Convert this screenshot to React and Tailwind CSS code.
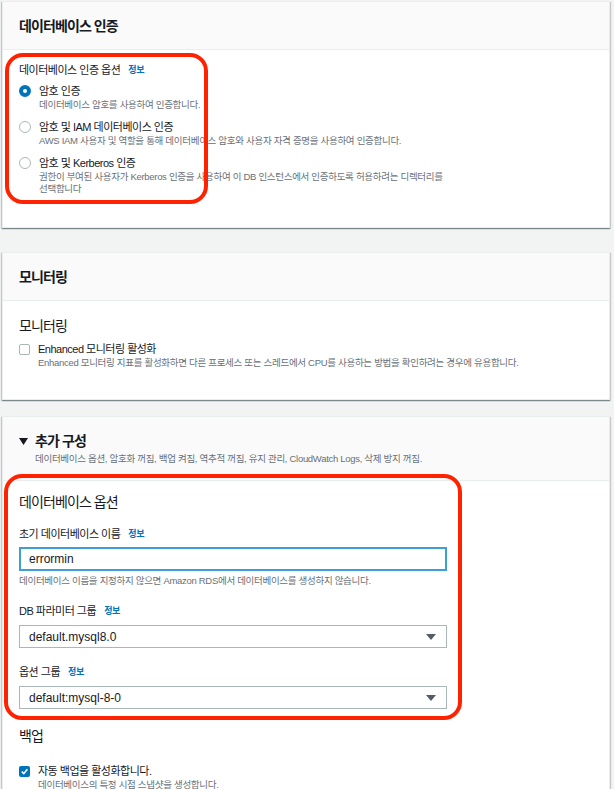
const KO_TITLE = "text-[14px] tracking-[-0.9px] leading-[20px]";
const KO_LABEL = "text-[11px] tracking-[-0.5px] leading-[16px]";
const KO_DESC = "text-[9.5px] tracking-[-0.3px] leading-[12px] text-[#687078]";

function Info() {
  return (
    <span className="ml-[8px] text-[9px] tracking-[-0.3px] font-bold text-[#0073bb]">정보</span>
  );
}

function Card({ children, className = "" }) {
  return (
    <div
      className={
        "bg-white border border-[#eaeded] shadow-[0_1px_1px_0_rgba(0,28,36,0.3),1px_1px_1px_0_rgba(0,28,36,0.15),-1px_1px_1px_0_rgba(0,28,36,0.15)] " +
        className
      }
    >
      {children}
    </div>
  );
}

function CardHeader({ title }) {
  return (
    <div className="h-[48px] bg-[#fafafa] border-b border-[#eaeded] px-4 flex items-center">
      <h2 className={KO_TITLE + " font-bold"}>{title}</h2>
    </div>
  );
}

function Radio({ checked, label, desc }) {
  return (
    <div className="flex items-start">
      {checked ? (
        <span className="mt-[2px] w-[12px] h-[12px] rounded-full border-[4px] border-[#0073bb] bg-white shrink-0" />
      ) : (
        <span className="mt-[2px] w-[12px] h-[12px] rounded-full border border-[#aab7b8] bg-white shrink-0" />
      )}
      <div className="ml-[8px]">
        <div className={KO_LABEL}>{label}</div>
        <div className={KO_DESC}>{desc}</div>
      </div>
    </div>
  );
}

function Checkbox({ checked, label, desc }) {
  return (
    <div className="flex items-start">
      {checked ? (
        <span className="mt-[3px] w-[11px] h-[11px] rounded-[2px] bg-[#0073bb] flex items-center justify-center shrink-0">
          <svg width="9" height="9" viewBox="0 0 10 10">
            <path d="M2 5.2 L4.2 7.4 L8.2 2.6" fill="none" stroke="white" strokeWidth="1.8" />
          </svg>
        </span>
      ) : (
        <span className="mt-[3px] w-[11px] h-[11px] rounded-[2px] border border-[#aab7b8] bg-white shrink-0" />
      )}
      <div className="ml-[8px]">
        <div className={KO_LABEL}>{label}</div>
        <div className={KO_DESC}>{desc}</div>
      </div>
    </div>
  );
}

function SelectBox({ value }) {
  return (
    <div className="mt-[6px] w-[428px] h-[23px] border border-[#aab7b8] bg-white flex items-center justify-between pl-[9px] pr-[10px]">
      <span className="text-[12px] tracking-normal">{value}</span>
      <svg width="10" height="6" viewBox="0 0 10 6">
        <polygon points="0,0 10,0 5,6" fill="#545b64" />
      </svg>
    </div>
  );
}

export default function App() {
  return (
    <div className="relative w-[614px] min-h-[789px] overflow-hidden bg-[#f2f3f3] pl-[2px] pr-[4px] pt-px font-['Liberation_Sans','Noto_Sans_CJK_KR',sans-serif] text-[#16191f]">
      {/* 데이터베이스 인증 */}
      <Card>
        <CardHeader title="데이터베이스 인증" />
        <div className="px-4 pt-3 pb-8">
          <div className={KO_LABEL + " flex items-center"}>
            데이터베이스 인증 옵션
            <Info />
          </div>
          <div className="mt-[5px] flex flex-col gap-2">
            <Radio checked label="암호 인증" desc="데이터베이스 암호를 사용하여 인증합니다." />
            <Radio
              label="암호 및 IAM 데이터베이스 인증"
              desc="AWS IAM 사용자 및 역할을 통해 데이터베이스 암호와 사용자 자격 증명을 사용하여 인증합니다."
            />
            <Radio
              label="암호 및 Kerberos 인증"
              desc={
                <>
                  권한이 부여된 사용자가 Kerberos 인증을 사용하여 이 DB 인스턴스에서 인증하도록 허용하려는 디렉터리를
                  <br />
                  선택합니다
                </>
              }
            />
          </div>
        </div>
      </Card>

      {/* 모니터링 */}
      <Card className="mt-[24px]">
        <CardHeader title="모니터링" />
        <div className="px-4 pt-[15px] pb-[30px]">
          <div className={KO_TITLE}>모니터링</div>
          <div className="mt-[5px]">
            <Checkbox
              label="Enhanced 모니터링 활성화"
              desc="Enhanced 모니터링 지표를 활성화하면 다른 프로세스 또는 스레드에서 CPU를 사용하는 방법을 확인하려는 경우에 유용합니다."
            />
          </div>
        </div>
      </Card>

      {/* 추가 구성 */}
      <Card className="mt-[16px] min-h-[400px]">
        <div className="bg-[#fafafa] border-b border-[#eaeded] px-4 pt-[14px] pb-[15px]">
          <div className="flex items-center">
            <svg width="9" height="7" viewBox="0 0 9 7" className="mr-[7px]">
              <polygon points="0,0 9,0 4.5,7" fill="#16191f" />
            </svg>
            <h2 className={KO_TITLE + " font-bold"}>추가 구성</h2>
          </div>
          <div className={KO_DESC + " mt-[2px] ml-[16px]"}>
            데이터베이스 옵션, 암호화 꺼짐, 백업 켜짐, 역추적 꺼짐, 유지 관리, CloudWatch Logs, 삭제 방지 꺼짐.
          </div>
        </div>
        <div className="px-4 pt-[11px] pb-6">
          <div className={KO_TITLE}>데이터베이스 옵션</div>

          <div className={KO_LABEL + " mt-[14px] flex items-center"}>
            초기 데이터베이스 이름
            <Info />
          </div>
          <div className="mt-[5px] w-[428px] h-[24px] border-2 border-[#3d9fd3] bg-white flex items-center pl-[8px]">
            <span className="text-[12px] tracking-normal">errormin</span>
          </div>
          <div className={KO_DESC + " mt-[4px]"}>
            데이터베이스 이름을 지정하지 않으면 Amazon RDS에서 데이터베이스를 생성하지 않습니다.
          </div>

          <div className={KO_LABEL + " mt-[16px] flex items-center"}>
            DB 파라미터 그룹
            <Info />
          </div>
          <SelectBox value="default.mysql8.0" />

          <div className={KO_LABEL + " mt-[16px] flex items-center"}>
            옵션 그룹
            <Info />
          </div>
          <SelectBox value="default:mysql-8-0" />

          <div className={KO_TITLE + " mt-[17px]"}>백업</div>
          <div className="mt-[17px]">
            <Checkbox checked label="자동 백업을 활성화합니다." desc="데이터베이스의 특정 시점 스냅샷을 생성합니다." />
          </div>
        </div>
      </Card>

      {/* annotation boxes */}
      <div className="absolute left-[5px] top-[53px] w-[203px] h-[151px] border-4 border-[#ff2200] rounded-[18px] pointer-events-none" />
      <div className="absolute left-[4px] top-[474px] w-[458px] h-[246px] border-4 border-[#ff2200] rounded-[18px] pointer-events-none" />
    </div>
  );
}
